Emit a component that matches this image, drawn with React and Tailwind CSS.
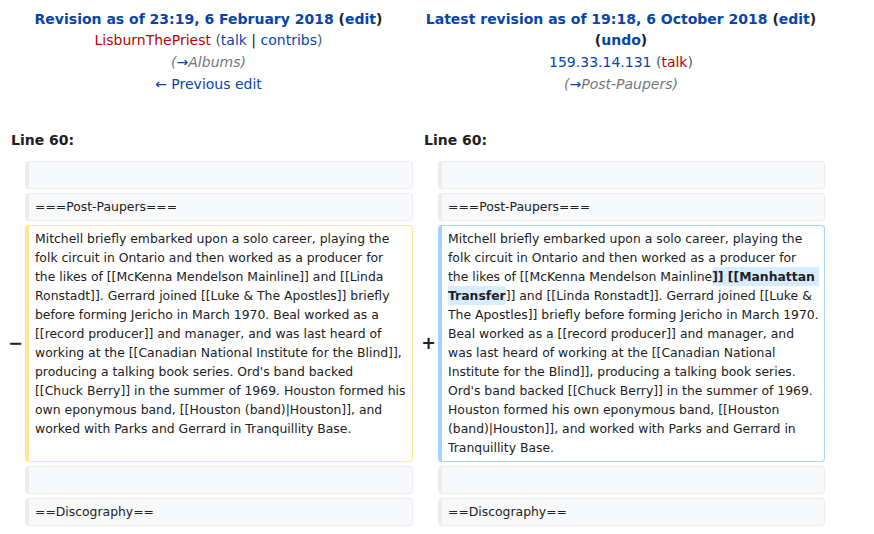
import React from "react";

const ctx =
  "border border-[#eaecf0] border-l-4 rounded-[4px] bg-[#f8f9fa] pl-[6px] pr-[5px] py-[3.5px] text-[12.4px] leading-[19px] whitespace-pre-wrap break-words";
const del =
  "border border-[#ffe49c] border-l-4 rounded-[4px] bg-white pl-[6px] pr-[5px] py-[3.5px] text-[12.4px] leading-[19px] whitespace-pre-wrap break-words";
const add =
  "border border-[#a3d3ff] border-l-4 rounded-[4px] bg-white pl-[6px] pr-[5px] py-[3.5px] text-[12.4px] leading-[19px] whitespace-pre-wrap break-words";

function Marker({ children }) {
  return (
    <div className="flex items-center justify-end -mr-[2px] text-[17.5px] leading-[21px] font-bold text-[#202122]">
      {children}
    </div>
  );
}

function CtxRow({ text }) {
  return (
    <>
      <div />
      <div className={ctx}>{text || "\u00a0"}</div>
      <div />
      <div className={ctx}>{text || "\u00a0"}</div>
    </>
  );
}

export default function App() {
  return (
    <div className="bg-white min-h-[534px] w-[874px]">
      <div className="w-[829px] grid grid-cols-[17px_388px_17px_387px] gap-[4px] p-[4px] font-['DejaVu_Sans',sans-serif] text-[#202122]">
        {/* Header left */}
        <div className="col-span-2 text-center text-[14px] leading-[21.8px] py-[4.5px] px-[7px]">
          <div className="font-bold">
            <span className="text-[#0645ad]">Revision as of 23:19, 6 February 2018</span>{" "}
            (<span className="text-[#0645ad]">edit</span>)
          </div>
          <div>
            <span className="text-[#ba0000]">LisburnThePriest</span>{" "}
            <span className="text-[#54595d]">(</span>
            <span className="text-[#0645ad]">talk</span> |{" "}
            <span className="text-[#0645ad]">contribs</span>
            <span className="text-[#54595d]">)</span>
          </div>
          <div className="italic text-[#72777d]">
            (<span className="text-[#0645ad] not-italic">→</span>Albums)
          </div>
          <div className="text-[#0645ad]">← Previous edit</div>
        </div>
        {/* Header right */}
        <div className="col-span-2 text-center text-[14px] leading-[21.8px] py-[4.5px] px-[7px]">
          <div className="font-bold whitespace-nowrap">
            <span className="text-[#0645ad]">Latest revision as of 19:18, 6 October 2018</span>{" "}
            (<span className="text-[#0645ad]">edit</span>)
          </div>
          <div className="font-bold">
            (<span className="text-[#0645ad]">undo</span>)
          </div>
          <div>
            <span className="text-[#0645ad]">159.33.14.131</span>{" "}
            <span className="text-[#54595d]">(</span>
            <span className="text-[#ba0000]">talk</span>
            <span className="text-[#54595d]">)</span>
          </div>
          <div className="italic text-[#72777d]">
            (<span className="text-[#0645ad] not-italic">→</span>Post-Paupers)
          </div>
          <div>&nbsp;</div>
        </div>
        {/* Line numbers */}
        <div className="col-span-2 text-[14px] leading-[21.8px] font-bold py-[4.5px] px-[7px]">Line 60:</div>
        <div className="col-span-2 text-[14px] leading-[21.8px] font-bold py-[4.5px] px-[7px]">Line 60:</div>

        <CtxRow text="" />
        <CtxRow text="===Post-Paupers===" />

        <Marker>−</Marker>
        <div className={del}>
          {"Mitchell briefly embarked upon a solo career, playing the folk circuit in Ontario and then worked as a producer for the likes of [[McKenna Mendelson Mainline]] and [[Linda Ronstadt]]. Gerrard joined [[Luke & The Apostles]] briefly before forming Jericho in March 1970. Beal worked as a [[record producer]] and manager, and was last heard of working at the [[Canadian National Institute for the Blind]], producing a talking book series. Ord's band backed\n[[Chuck Berry]] in the summer of 1969. Houston formed his own eponymous band, [[Houston (band)|Houston]], and worked with Parks and Gerrard in Tranquillity Base."}
        </div>
        <Marker>+</Marker>
        <div className={add}>
          {"Mitchell briefly embarked upon a solo career, playing the folk circuit in Ontario and then worked as a producer for the likes of [[McKenna Mendelson Mainline"}
          <span className="font-bold bg-[#d8ecff] rounded-[4px] py-[2px]">{"]] [[Manhattan Transfer"}</span>
          {"]] and [[Linda Ronstadt]]. Gerrard joined [[Luke & The Apostles]] briefly before forming Jericho in March 1970. Beal worked as a [[record producer]] and manager, and was last heard of working at the [[Canadian National Institute for the Blind]], producing a talking book series. Ord's band backed [[Chuck Berry]] in the summer of 1969. Houston formed his own eponymous band, [[Houston (band)|Houston]], and worked with Parks and Gerrard in Tranquillity Base."}
        </div>

        <CtxRow text="" />
        <CtxRow text="==Discography==" />
      </div>
    </div>
  );
}
